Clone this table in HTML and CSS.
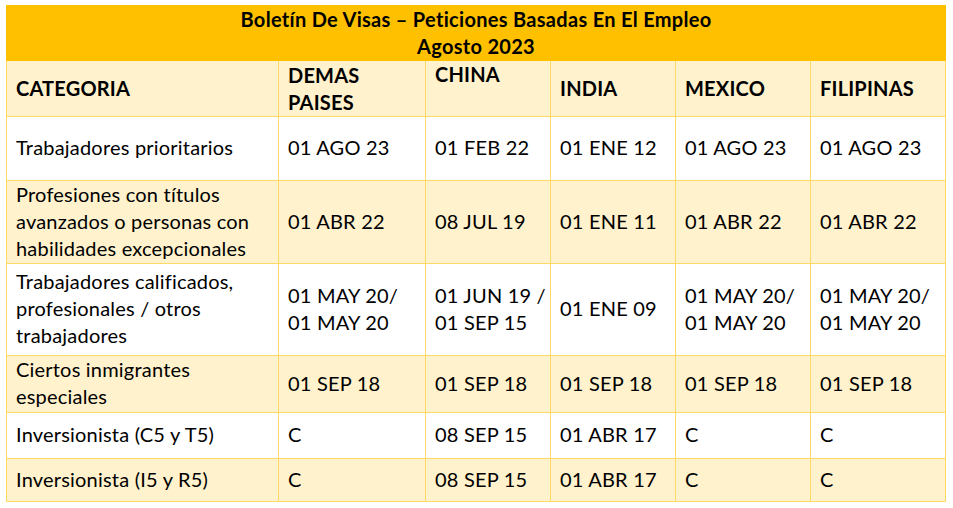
FILE: index.html
```
<!DOCTYPE html>
<html lang="es">
<head>
<meta charset="utf-8">
<title>Boletín De Visas</title>
<link rel="stylesheet" href="styles.css">
</head>
<body>
<table class="visas">
  <colgroup>
    <col class="c-cat"><col class="c-demas"><col class="c-china"><col class="c-india"><col class="c-mex"><col class="c-fil">
  </colgroup>
  <thead>
    <tr class="r-title"><th colspan="6" class="title">Boletín De Visas – Peticiones Basadas En El Empleo<br>Agosto 2023</th></tr>
    <tr class="r-head">
      <th>CATEGORIA</th>
      <th>DEMAS<br>PAISES</th>
      <th class="top">CHINA</th>
      <th>INDIA</th>
      <th>MEXICO</th>
      <th>FILIPINAS</th>
    </tr>
  </thead>
  <tbody>
    <tr class="r1">
      <td>Trabajadores prioritarios</td><td>01 AGO 23</td><td>01 FEB 22</td><td>01 ENE 12</td><td>01 AGO 23</td><td>01 AGO 23</td>
    </tr>
    <tr class="r2 alt">
      <td>Profesiones con títulos<br>avanzados o personas con<br>habilidades excepcionales</td><td>01 ABR 22</td><td>08 JUL 19</td><td>01 ENE 11</td><td>01 ABR 22</td><td>01 ABR 22</td>
    </tr>
    <tr class="r3">
      <td>Trabajadores calificados,<br>profesionales / otros<br>trabajadores</td><td>01 MAY 20/<br>01 MAY 20</td><td>01 JUN 19 /<br>01 SEP 15</td><td>01 ENE 09</td><td>01 MAY 20/<br>01 MAY 20</td><td>01 MAY 20/<br>01 MAY 20</td>
    </tr>
    <tr class="r4 alt">
      <td>Ciertos inmigrantes<br>especiales</td><td>01 SEP 18</td><td>01 SEP 18</td><td>01 SEP 18</td><td>01 SEP 18</td><td>01 SEP 18</td>
    </tr>
    <tr class="r5">
      <td>Inversionista (C5 y T5)</td><td>C</td><td>08 SEP 15</td><td>01 ABR 17</td><td>C</td><td>C</td>
    </tr>
    <tr class="r6 alt">
      <td>Inversionista (I5 y R5)</td><td>C</td><td>08 SEP 15</td><td>01 ABR 17</td><td>C</td><td>C</td>
    </tr>
  </tbody>
</table>
</body>
</html>
```
FILE: styles.css
```
html, body {
  margin: 0;
  padding: 0;
  background: #ffffff;
}
body {
  padding: 5px 0 0 6px;
  font-family: Lato, "Open Sans", sans-serif;
  color: #000000;
}
.visas {
  border-collapse: collapse;
  table-layout: fixed;
  width: 939px;
  font-size: 20px;
  line-height: 27px;
}
.c-cat { width: 272px; }
.c-demas { width: 147px; }
.c-china { width: 125px; }
.c-india { width: 125px; }
.c-mex { width: 135px; }
.c-fil { width: 135px; }
.visas th, .visas td {
  border: 1px solid #ffd966;
  padding: 0 9px;
  text-align: left;
  vertical-align: middle;
  white-space: nowrap;
  font-weight: normal;
  letter-spacing: 0.2px;
}
.visas th { font-weight: bold; }
.r-title th.title {
  background: #ffc000;
  border-color: #ffc000;
  text-align: center;
  height: 54px;
  padding: 0;
  letter-spacing: 0.3px;
}
.r-head th {
  background: #fff2cc;
  height: 55px;
}
.r-head th.top { vertical-align: top; padding-top: 0; }
.alt td { background: #fff2cc; }
.visas td { padding-bottom: 2px; }
.r1 td { height: 61px; }
.r2 td { height: 81px; padding-bottom: 1px; }
.r3 td { height: 89px; }
.r4 td { height: 54px; }
.r5 td { height: 43px; }
.r6 td { height: 40px; }
```
